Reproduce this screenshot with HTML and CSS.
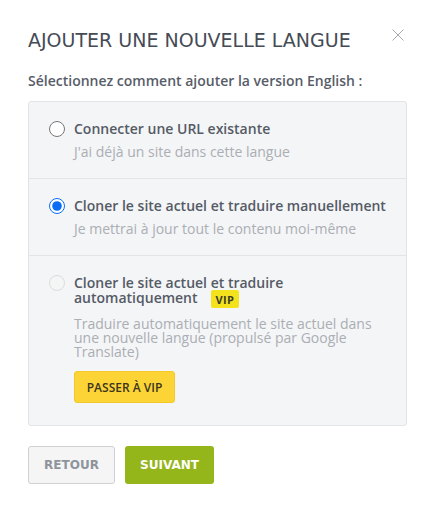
FILE: index.html
```html
<!DOCTYPE html>
<html lang="fr">
  <head>
    <meta charset="UTF-8" />
    <meta name="viewport" content="width=device-width, initial-scale=1.0" />
    <title>Ajouter une nouvelle langue</title>
    <link rel="stylesheet" href="styles.css">
  </head>

  <body>
    <div class="modal">
      <div class="modal-head">
        <h3 class="modal-title">Ajouter une nouvelle langue</h3>
        <button type="button" class="btn-close" aria-label="Fermer">
          <svg width="12" height="12" viewBox="0 0 12 12">
            <path d="M0.5 0.5 L11.5 11.5 M11.5 0.5 L0.5 11.5" stroke="#a8abb0" stroke-width="1" fill="none" />
          </svg>
        </button>
      </div>

      <p class="lead">Sélectionnez comment ajouter la version English :</p>

      <ul class="options">
        <li class="option">
          <label class="option-label">
            <input type="radio" name="mode" value="url" />
            <span class="option-text">
              <strong class="option-title">Connecter une URL existante</strong>
              <span class="option-desc">J'ai déjà un site dans cette langue</span>
            </span>
          </label>
        </li>
        <li class="option">
          <label class="option-label">
            <input type="radio" name="mode" value="manual" checked />
            <span class="option-text">
              <strong class="option-title">Cloner le site actuel et traduire manuellement</strong>
              <span class="option-desc">Je mettrai à jour tout le contenu moi-même</span>
            </span>
          </label>
        </li>
        <li class="option option-vip">
          <label class="option-label">
            <input type="radio" name="mode" value="auto" disabled />
            <span class="option-text">
              <!-- 제목 + VIP 배지 (flex-wrap으로 줄바꿈) -->
              <strong class="option-title with-badge">
                <span>Cloner le site actuel et traduire</span>
                <span>automatiquement</span>
                <span class="badge-vip">VIP</span>
              </strong>
              <span class="option-desc long">Traduire automatiquement le site actuel dans une nouvelle langue (propulsé par Google Translate)</span>
              <button type="button" class="btn-vip">Passer à VIP</button>
            </span>
          </label>
        </li>
      </ul>

      <div class="modal-foot">
        <button type="button" class="btn btn-back">Retour</button>
        <button type="button" class="btn btn-next">Suivant</button>
      </div>
    </div>
  </body>
</html>
```

FILE: styles.css
```css
body {
  margin: 0;
  background: #fff;
  font-family: "Open Sans", "Liberation Sans", sans-serif;
  color: #555b66;
}

ul,
li {
  list-style: none;
  margin: 0;
  padding: 0;
}

button {
  cursor: pointer;
  border: none;
  font-family: inherit;
}

.modal {
  width: 379px;
  padding: 0 28px;
}

/* 헤더 */
.modal-head {
  display: flex;
  justify-content: space-between;
  align-items: flex-start;
  padding-top: 29px;
}

.modal-title {
  margin: 0;
  font-family: "DejaVu Sans", sans-serif;
  font-weight: 400;
  font-size: 19px;
  line-height: 22px;
  text-transform: uppercase;
  color: #454b55;
}

.btn-close {
  background: none;
  padding: 0;
  margin: 0 3px 0 0;
  width: 12px;
  height: 12px;
  display: flex;
}

.lead {
  margin: 20px 0 10px;
  font-size: 14px;
  line-height: 20px;
  font-weight: 600;
  color: #575d68;
}

/* 옵션 박스 */
.options {
  background: #f4f5f7;
  border: 1px solid #e2e4e7;
  border-radius: 3px;
}

.option + .option {
  border-top: 1px solid #e2e4e7;
}

.option-label {
  display: flex;
  align-items: flex-start;
  gap: 9px;
  padding: 19px 20px;
  cursor: pointer;
}

.option-vip .option-label {
  padding-bottom: 22px;
}

.option-label input {
  margin: 0;
  width: 16px;
  height: 16px;
  flex: none;
  accent-color: #0a6cf5;
}

.option-label input:disabled {
  opacity: 0.6;
}

.option-text {
  display: flex;
  flex-direction: column;
  align-items: flex-start;
}

.option-title {
  font-size: 14px;
  line-height: 15px;
  font-weight: 600;
  color: #555b66;
}

.option-title.with-badge {
  display: flex;
  flex-wrap: wrap;
  align-items: flex-start;
  column-gap: 4px;
}

.option-desc {
  margin-top: 8px;
  font-size: 14px;
  line-height: 15px;
  color: #abaeb3;
}

.option-desc.long {
  margin-top: 9px;
  line-height: 14px;
}

.badge-vip {
  margin-left: 9px;
  padding: 3px 5px 2px;
  font-size: 11px;
  line-height: 13px;
  font-weight: 700;
  letter-spacing: 0.3px;
  border-radius: 2px;
  background: #f4e31c;
  color: #3b3b2a;
}

.btn-vip {
  margin-top: 12px;
  width: 101px;
  height: 32px;
  padding: 0;
  border: 1px solid #f3c92a;
  border-radius: 3px;
  background: #fdd435;
  font-size: 12px;
  font-weight: 600;
  text-transform: uppercase;
  color: #3b3520;
}

/* 하단 버튼 */
.modal-foot {
  display: flex;
  gap: 10px;
  margin-top: 20px;
}

.btn {
  height: 38px;
  border-radius: 3px;
  font-family: "DejaVu Sans", sans-serif;
  font-size: 12px;
  font-weight: 700;
  text-transform: uppercase;
}

.btn-back {
  width: 87px;
  border: 1px solid #cfd0d2;
  background: #f5f5f6;
  color: #8e949c;
}

.btn-next {
  width: 89px;
  background: #95b61a;
  color: #fff;
}
```
